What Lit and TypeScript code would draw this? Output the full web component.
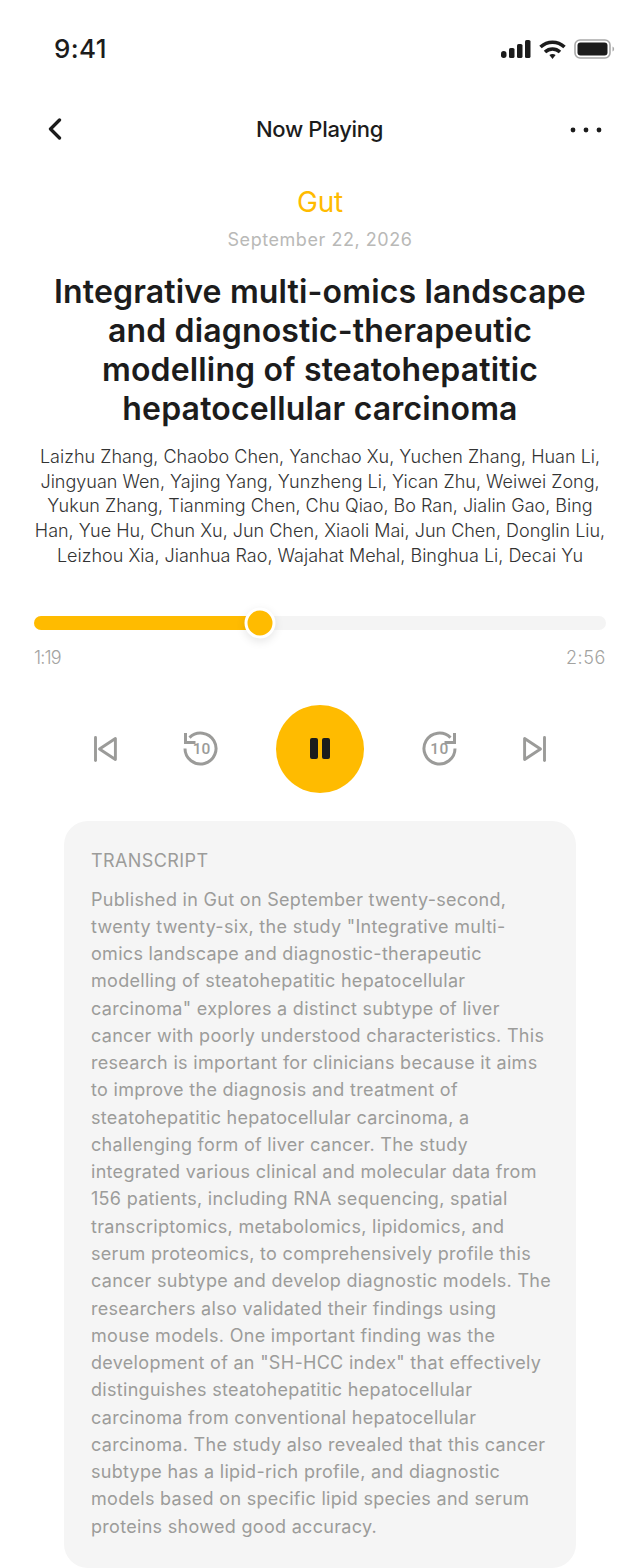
import { LitElement, css, html, svg } from "lit";
import { customElement } from "lit/decorators.js";

const AUTHORS = [
  "Laizhu Zhang, Chaobo Chen, Yanchao Xu, Yuchen Zhang, Huan Li,",
  "Jingyuan Wen, Yajing Yang, Yunzheng Li, Yican Zhu, Weiwei Zong,",
  "Yukun Zhang, Tianming Chen, Chu Qiao, Bo Ran, Jialin Gao, Bing",
  "Han, Yue Hu, Chun Xu, Jun Chen, Xiaoli Mai, Jun Chen, Donglin Liu,",
  "Leizhou Xia, Jianhua Rao, Wajahat Mehal, Binghua Li, Decai Yu",
];

const TITLE = [
  "Integrative multi-omics landscape",
  "and diagnostic-therapeutic",
  "modelling of steatohepatitic",
  "hepatocellular carcinoma",
];

const TRANSCRIPT = [
  "Published in Gut on September twenty-second,",
  "twenty twenty-six, the study \"Integrative multi-",
  "omics landscape and diagnostic-therapeutic",
  "modelling of steatohepatitic hepatocellular",
  "carcinoma\" explores a distinct subtype of liver",
  "cancer with poorly understood characteristics. This",
  "research is important for clinicians because it aims",
  "to improve the diagnosis and treatment of",
  "steatohepatitic hepatocellular carcinoma, a",
  "challenging form of liver cancer. The study",
  "integrated various clinical and molecular data from",
  "156 patients, including RNA sequencing, spatial",
  "transcriptomics, metabolomics, lipidomics, and",
  "serum proteomics, to comprehensively profile this",
  "cancer subtype and develop diagnostic models. The",
  "researchers also validated their findings using",
  "mouse models. One important finding was the",
  "development of an \"SH-HCC index\" that effectively",
  "distinguishes steatohepatitic hepatocellular",
  "carcinoma from conventional hepatocellular",
  "carcinoma. The study also revealed that this cancer",
  "subtype has a lipid-rich profile, and diagnostic",
  "models based on specific lipid species and serum",
  "proteins showed good accuracy.",
];

const signalIcon = svg`<svg width="30" height="18" viewBox="0 0 30 18" fill="#1c1c1c">
  <rect x="0" y="11" width="5.5" height="7" rx="2.7"/>
  <rect x="8" y="8" width="5.5" height="10" rx="1.6"/>
  <rect x="16" y="4" width="5.5" height="14" rx="1.6"/>
  <rect x="24" y="0" width="5.5" height="18" rx="1.6"/>
</svg>`;

const wifiIcon = svg`<svg width="27" height="19" viewBox="0 0 27 19" fill="none" stroke="#1c1c1c" stroke-width="3.6">
  <path d="M1.5 7C8.5 .6 18.5 .6 25.5 7"/>
  <path d="M6 12C10.5 8 16.5 8 21 12"/>
  <path d="M10.4 15L13.5 19l3.1-4C14.8 13.6 12.2 13.6 10.4 15Z" fill="#1c1c1c" stroke="none"/>
</svg>`;

const batteryIcon = svg`<svg width="41" height="20" viewBox="0 0 41 20" fill="none">
  <rect x="1" y="1" width="35" height="18" rx="5" stroke="#a9a9a9" stroke-width="1.6"/>
  <rect x="3.5" y="3.5" width="30" height="13" rx="3" fill="#1c1c1c"/>
  <path d="M38.5 7.5c1.2.4 1.6 1.4 1.6 2.5s-.4 2.1-1.6 2.5Z" fill="#a9a9a9"/>
</svg>`;

const backIcon = svg`<svg width="14" height="22" viewBox="0 0 14 22" fill="none" stroke="#1c1c1c" stroke-width="3.3" stroke-linecap="round" stroke-linejoin="round">
  <path d="M11.5 2L2.5 11l9 9"/>
</svg>`;

const moreIcon = svg`<svg width="32" height="6" viewBox="0 0 32 6" fill="#1c1c1c">
  <circle cx="3" cy="3" r="2.4"/><circle cx="16" cy="3" r="2.4"/><circle cx="29" cy="3" r="2.4"/>
</svg>`;

const prevIcon = svg`<svg width="23" height="26" viewBox="0 0 23 26" fill="none" stroke="#9b9b99" stroke-width="2.9" stroke-linecap="round" stroke-linejoin="round">
  <path d="M1.5 1.5v23"/>
  <path d="M21.4 2.5v21L5.5 13Z"/>
</svg>`;

const nextIcon = svg`<svg width="23" height="26" viewBox="0 0 23 26" fill="none" stroke="#9b9b99" stroke-width="2.9" stroke-linecap="round" stroke-linejoin="round">
  <path d="M21.5 1.5v23"/>
  <path d="M1.6 2.5v21L17.5 13Z"/>
</svg>`;

const back10Icon = svg`<svg width="35" height="35" viewBox="0 0 35 35" fill="none" stroke="#9b9b99" stroke-width="3">
  <path d="M6.5 6.6A15.5 15.5 0 1 1 2 17.5"/>
  <path d="M2.5 2v9.5h10"/>
  <text x="18.5" y="23" text-anchor="middle" stroke="none" font-family="Roboto, sans-serif" font-size="15.5" font-weight="500" fill="#9b9b99">10</text>
</svg>`;

const forward10Icon = svg`<svg width="35" height="35" viewBox="0 0 35 35" fill="none" stroke="#9b9b99" stroke-width="3">
  <path d="M28.5 6.6A15.5 15.5 0 1 0 33 17.5"/>
  <path d="M32.5 2v9.5h-10"/>
  <text x="17.5" y="23" text-anchor="middle" stroke="none" font-family="Roboto, sans-serif" font-size="15.5" font-weight="500" letter-spacing="0.5" fill="#9b9b99">10</text>
</svg>`;

const pauseIcon = svg`<svg width="20" height="21" viewBox="0 0 20 21" fill="#1c1c1c">
  <rect x="0" y="0" width="8" height="21" rx="2"/>
  <rect x="12" y="0" width="8" height="21" rx="2"/>
</svg>`;

@customElement("app-root")
export class AppRoot extends LitElement {
  static styles = css`
    :host {
      display: block;
      width: 640px;
      height: 1568px;
      overflow: hidden;
      background: #fff;
      color: #1c1c1c;
      font-family: Inter, "Liberation Sans", sans-serif;
    }

    .status {
      height: 98px;
      box-sizing: border-box;
      padding: 34px 25px 0 54px;
      display: flex;
      justify-content: space-between;
      align-items: flex-start;
    }

    .clock {
      font-size: 26px;
      line-height: 30px;
      font-weight: 500;
      letter-spacing: 0.4px;
    }

    .status-icons {
      display: flex;
      align-items: center;
      gap: 8px;
      padding-top: 5px;
    }

    .nav {
      height: 62px;
      padding: 0 38px;
      display: grid;
      grid-template-columns: 1fr auto 1fr;
      align-items: center;
    }

    .nav-back {
      display: flex;
      padding-left: 10px;
    }

    .nav-more {
      display: flex;
      justify-content: flex-end;
      padding-top: 1px;
    }

    .nav-title {
      font-size: 22px;
      line-height: 26px;
      font-weight: 500;
      letter-spacing: -0.32px;
      margin: -1px 0 0 -1px;
    }

    .head {
      text-align: center;
      padding-top: 24px;
    }

    .journal {
      color: #ffbb00;
      font-size: 28px;
      line-height: 36px;
      letter-spacing: -0.2px;
    }

    .date {
      margin-top: 2px;
      color: #b9b9b7;
      font-size: 18px;
      line-height: 36px;
      letter-spacing: 0.55px;
    }

    .title {
      margin: 14px 0 0;
      font-size: 32px;
      line-height: 39px;
      font-weight: 600;
      letter-spacing: 0.15px;
    }

    .authors {
      margin-top: 17px;
      font-size: 18px;
      line-height: 24.7px;
      font-weight: 300;
      letter-spacing: 0;
      color: #333;
    }

    .line {
      display: block;
      white-space: nowrap;
    }

    .player {
      padding: 0 34px;
      margin-top: 47px;
    }

    .track {
      height: 14px;
      border-radius: 7px;
      background: #f4f4f4;
      position: relative;
    }

    .fill {
      height: 100%;
      border-radius: 7px;
      background: #ffbb00;
    }

    .knob {
      position: absolute;
      top: 50%;
      width: 25px;
      height: 25px;
      box-sizing: content-box;
      border: 3px solid #fff;
      border-radius: 50%;
      background: #ffbb00;
      transform: translate(-50%, -50%);
      box-shadow: 0 3px 10px rgba(0, 0, 0, 0.1);
    }

    .times {
      display: flex;
      justify-content: space-between;
      margin-top: 15px;
      color: #a3a3a1;
      font-size: 18px;
      line-height: 26px;
      font-weight: 300;
    }

    .elapsed {
      letter-spacing: -0.8px;
    }

    .total {
      letter-spacing: 0.6px;
    }

    .controls {
      margin-top: 34px;
      padding: 0 94px;
      display: flex;
      align-items: center;
      justify-content: center;
      gap: 58px;
    }

    .controls > * {
      display: flex;
    }

    .skip-prev {
      margin-right: 8px;
    }

    .skip-next {
      margin-left: 8px;
    }

    .pause {
      width: 88px;
      height: 88px;
      border-radius: 50%;
      background: #ffbb00;
      align-items: center;
      justify-content: center;
    }

    .card {
      margin: 28px 64px 0;
      height: 747px;
      box-sizing: border-box;
      padding: 27px 27px 0;
      border-radius: 24px;
      background: #f5f5f5;
      color: #9c9c9a;
      font-size: 18px;
    }

    .card-title {
      line-height: 26px;
      letter-spacing: 0.4px;
    }

    .card-body {
      margin-top: 12px;
      line-height: 27.26px;
      letter-spacing: 0.3px;
    }
  `;

  private progress = 226 / 572;

  render() {
    const pct = `${this.progress * 100}%`;
    return html`
      <div class="status">
        <span class="clock">9:41</span>
        <div class="status-icons">${signalIcon}${wifiIcon}${batteryIcon}</div>
      </div>
      <div class="nav">
        <div class="nav-back">${backIcon}</div>
        <span class="nav-title">Now Playing</span>
        <div class="nav-more">${moreIcon}</div>
      </div>
      <div class="head">
        <div class="journal">Gut</div>
        <div class="date">September 22, 2026</div>
        <h1 class="title">
          ${TITLE.map((l) => html`<span class="line">${l}</span>`)}
        </h1>
        <div class="authors">
          ${AUTHORS.map((l) => html`<span class="line">${l}</span>`)}
        </div>
      </div>
      <div class="player">
        <div class="track">
          <div class="fill" style="width: ${pct}"></div>
          <div class="knob" style="left: ${pct}"></div>
        </div>
        <div class="times">
          <span class="elapsed">1:19</span><span class="total">2:56</span>
        </div>
      </div>
      <div class="controls">
        <span class="skip-prev">${prevIcon}</span>
        <span>${back10Icon}</span>
        <div class="pause">${pauseIcon}</div>
        <span>${forward10Icon}</span>
        <span class="skip-next">${nextIcon}</span>
      </div>
      <div class="card">
        <div class="card-title">TRANSCRIPT</div>
        <div class="card-body">
          ${TRANSCRIPT.map((l) => html`<span class="line">${l}</span>`)}
        </div>
      </div>
    `;
  }
}
